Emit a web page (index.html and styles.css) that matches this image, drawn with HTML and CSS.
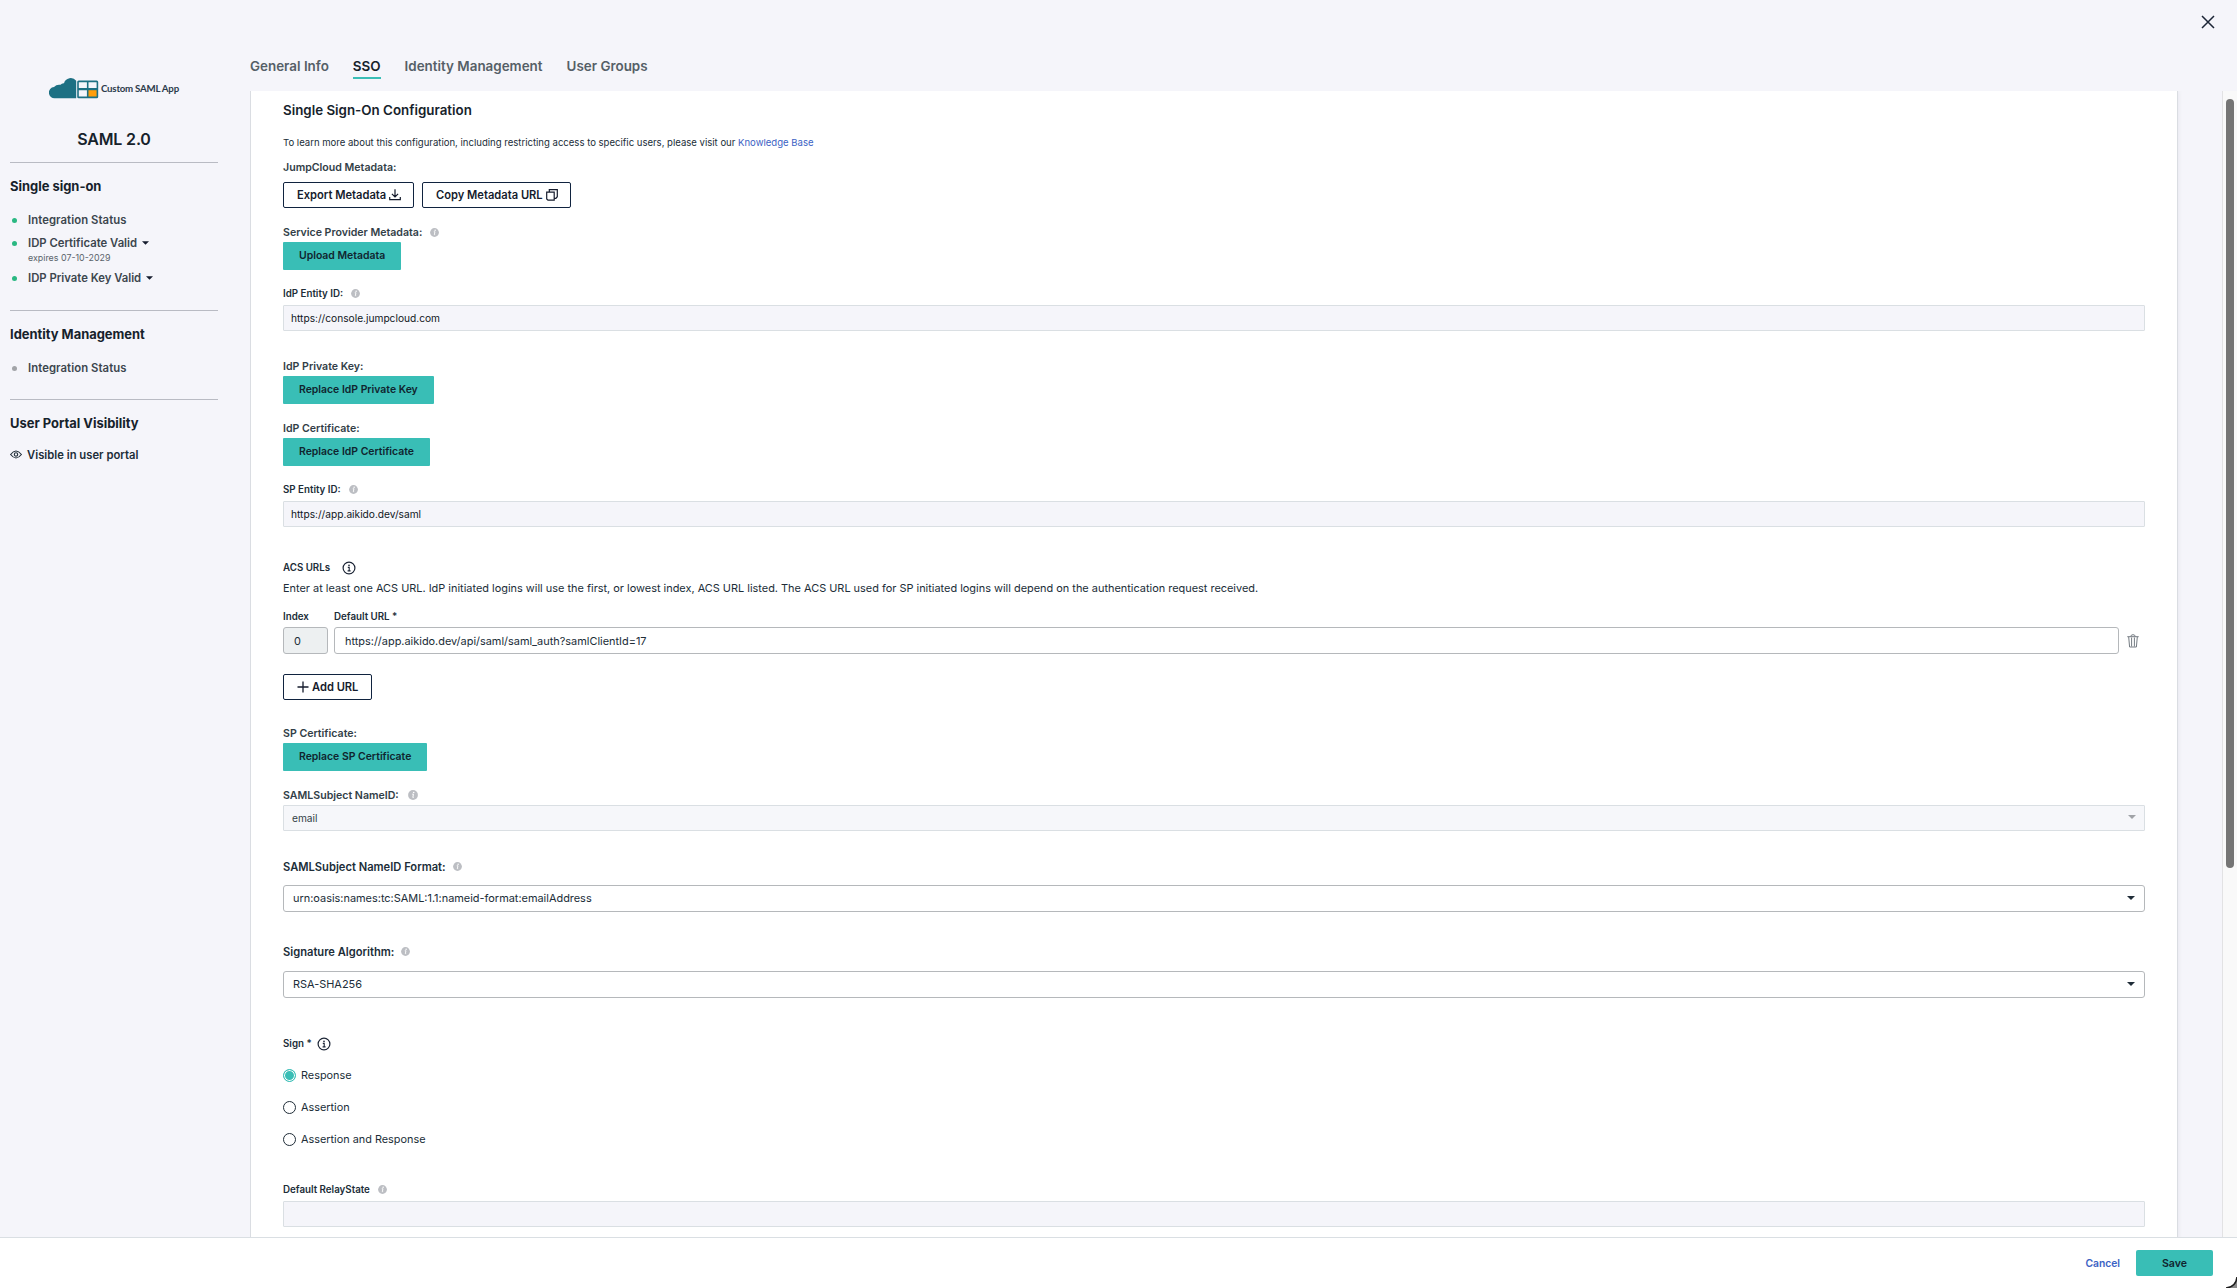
FILE: index.html
```html
<!DOCTYPE html>
<html lang="en">
<head>
    <meta charset="UTF-8">
    <meta name="viewport" content="width=device-width, initial-scale=1.0">
    <title>SAML 2.0 - Single Sign-On Configuration</title>
    <link rel="stylesheet" href="styles.css">
</head>
<body>
    <!-- shared icons -->
    <svg width="0" height="0" class="sprite">
        <symbol id="info-solid" viewBox="0 0 10 10">
            <circle cx="5" cy="5" r="4.9" fill="#bcbec3"/>
            <circle cx="5.7" cy="2.5" r=".8" fill="#fff"/>
            <path d="M4.2 4.2h1.3L4.8 7.4h.9" fill="none" stroke="#fff" stroke-width="1"/>
        </symbol>
        <symbol id="info-outline" viewBox="0 0 14 14">
            <circle cx="7" cy="7" r="5.9" fill="none" stroke="#1c2536" stroke-width="1.2"/>
            <circle cx="7" cy="4.3" r=".85" fill="#1c2536"/>
            <path d="M5.8 6.4H7.2V9.8M5.6 9.9h3" fill="none" stroke="#1c2536" stroke-width="1.1"/>
        </symbol>
        <symbol id="caret" viewBox="0 0 8 4">
            <path d="M0 0h8L4 4z" fill="currentColor"/>
        </symbol>
    </svg>

    <div class="modal">
        <button class="close-btn" aria-label="Close">
            <svg width="14" height="14" viewBox="0 0 14 14"><path d="M1 1l12 12M13 1L1 13" stroke="#1c2536" stroke-width="1.5" fill="none"/></svg>
        </button>

        <div class="modal-body">
            <aside class="sidebar">
                <div class="logo">
                    <svg width="50" height="21" viewBox="0 0 50 21">
                        <path d="M6 20.2A5.6 5.6 0 0 1 5 9 7 7 0 0 1 11.500 6.800 Q12.800 5 15 5.200 A7 7 0 0 1 27.200 2.700V20.200z" fill="#1d7083"/>
                        <rect x="28.200" y="2.500" width="21" height="17.700" rx="1.500" fill="#1d7083"/>
                        <path d="M29.800 4.300h8.100v5.600h-8.100zM39.500 4.300h8.100v5.600h-8.100zM29.800 12.200h8.100v6.300h-8.100z" fill="#f5f5fa"/>
                        <path d="M39.500 12.200h8.100v6.300h-8.100z" fill="#ff9e0b"/>
                    </svg>
                    <span>Custom SAML App</span>
                </div>
                <h1>SAML 2.0</h1>

                <section>
                    <h3>Single sign-on</h3>
                    <div class="status first"><i class="dot green"></i>Integration Status</div>
                    <div class="status cert"><i class="dot green"></i>IDP Certificate Valid <svg class="caret"><use href="#caret"/></svg></div>
                    <div class="expires">expires 07-10-2029</div>
                    <div class="status key"><i class="dot green"></i>IDP Private Key Valid <svg class="caret"><use href="#caret"/></svg></div>
                </section>

                <section>
                    <h3>Identity Management</h3>
                    <div class="status first"><i class="dot"></i>Integration Status</div>
                </section>

                <section>
                    <h3>User Portal Visibility</h3>
                    <div class="visible">
                        <svg width="12" height="9" viewBox="0 0 12 9"><path d="M.6 4.500Q6-2.400 11.400 4.500 6 11.400.6 4.500z" fill="none" stroke="#202d38" stroke-width="1.100"/><circle cx="6" cy="4.500" r="1.700" fill="none" stroke="#202d38" stroke-width="1.100"/></svg>
                        Visible in user portal
                    </div>
                </section>
            </aside>

            <main>
                <nav class="tabs">
                    <a>General Info</a>
                    <a class="active">SSO</a>
                    <a>Identity Management</a>
                    <a>User Groups</a>
                </nav>

                <div class="scroll-area">
                    <div class="card">
                        <h2>Single Sign-On Configuration</h2>
                        <p class="intro">To learn more about this configuration, including restricting access to specific users, please visit our <a>Knowledge Base</a></p>

                        <div class="label jc-label">JumpCloud Metadata:</div>
                        <div class="btn-row">
                            <button class="btn-outline">Export Metadata
                                <svg width="12" height="12" viewBox="0 0 12 12"><path d="M6 .3v7.500M2.900 4.900L6 7.900l3.100-3M.7 8v2.600h10.600V8" fill="none" stroke="#151b2c" stroke-width="1.200"/></svg>
                            </button>
                            <button class="btn-outline copy">Copy Metadata URL
                                <svg width="12" height="12" viewBox="0 0 12 12"><path d="M.7 3.200h7.500v8H2L.7 9.900zM3.300 3V.7h8v7L9.900 9.300H8.400" fill="none" stroke="#151b2c" stroke-width="1.200"/></svg>
                            </button>
                        </div>

                        <div class="label gap">Service Provider Metadata: <svg class="info"><use href="#info-solid"/></svg></div>
                        <button class="btn-teal">Upload Metadata</button>

                        <div class="label small gap-sm">IdP Entity ID: <svg class="info"><use href="#info-solid"/></svg></div>
                        <div class="field">https://console.jumpcloud.com</div>

                        <div class="label gap-lg">IdP Private Key:</div>
                        <button class="btn-teal">Replace IdP Private Key</button>

                        <div class="label gap">IdP Certificate:</div>
                        <button class="btn-teal">Replace IdP Certificate</button>

                        <div class="label small gap-sm">SP Entity ID: <svg class="info"><use href="#info-solid"/></svg></div>
                        <div class="field">https://app.aikido.dev/saml</div>

                        <div class="label small acs-label">ACS URLs <svg class="info-lg"><use href="#info-outline"/></svg></div>
                        <p class="acs-text">Enter at least one ACS URL. IdP initiated logins will use the first, or lowest index, ACS URL listed. The ACS URL used for SP initiated logins will depend on the authentication request received.</p>
                        <div class="url-grid">
                            <div class="label small">Index</div>
                            <div class="label small">Default URL *</div>
                            <span></span>
                            <div class="box index">0</div>
                            <div class="box">https://app.aikido.dev/api/saml/saml_auth?samlClientId=17</div>
                            <svg class="trash" width="12" height="14" viewBox="0 0 12 14"><path d="M.3 2.700h11.400M3.700 2.500Q3.900.7 6 .7t2.300 1.800M1.700 3l.9 10h6.800l.9-10M4.600 3.500v9M7.400 3.500v9" fill="none" stroke="#747b82" stroke-width="1"/></svg>
                        </div>
                        <button class="btn-outline add">
                            <svg width="12" height="12" viewBox="0 0 12 12"><path d="M6 .5v11M.5 6h11" stroke="#151b2c" stroke-width="1.300"/></svg>
                            Add URL
                        </button>

                        <div class="label sp-label">SP Certificate:</div>
                        <button class="btn-teal">Replace SP Certificate</button>

                        <div class="label gap">SAMLSubject NameID: <svg class="info big"><use href="#info-solid"/></svg></div>
                        <div class="field select-disabled">email <svg class="caret"><use href="#caret"/></svg></div>

                        <div class="label large gap-lg">SAMLSubject NameID Format: <svg class="info"><use href="#info-solid"/></svg></div>
                        <div class="box select">urn:oasis:names:tc:SAML:1.1:nameid-format:emailAddress <svg class="caret"><use href="#caret"/></svg></div>

                        <div class="label large sig-label">Signature Algorithm: <svg class="info"><use href="#info-solid"/></svg></div>
                        <div class="box select sig">RSA-SHA256 <svg class="caret"><use href="#caret"/></svg></div>

                        <div class="label small sign-label">Sign * <svg class="info-lg"><use href="#info-outline"/></svg></div>
                        <div class="radio checked"><i></i>Response</div>
                        <div class="radio"><i></i>Assertion</div>
                        <div class="radio"><i></i>Assertion and Response</div>

                        <div class="label small relay-label">Default RelayState <svg class="info"><use href="#info-solid"/></svg></div>
                        <div class="field"></div>
                    </div>
                    <div class="scrollbar"><div class="thumb"></div></div>
                </div>
            </main>
        </div>

        <footer>
            <a>Cancel</a>
            <button class="save-btn">Save</button>
            <svg class="corner" width="11" height="11" viewBox="0 0 11 11"><path d="M11 0v11H0Q10 10 11 0z" fill="#8b8b8b"/><path d="M0 11Q10 10 11 0" fill="none" stroke="#1d1d1d" stroke-width="1.500"/></svg>
        </footer>
    </div>
</body>
</html>
```

FILE: styles.css
```css
* {
    box-sizing: border-box;
}

body {
    margin: 0;
    overflow: hidden;
    background: #f5f5fa;
    color: #202d38;
    font-family: Inter, "Liberation Sans", sans-serif;
    font-size: 10.93px;
    line-height: 14px;
}

h1, h2, h3, p {
    margin: 0;
}

button {
    font-family: inherit;
    cursor: pointer;
}

svg {
    display: block;
    flex: none;
}

.sprite {
    position: absolute;
}

.modal {
    height: 100vh;
    display: flex;
    flex-direction: column;
}

.close-btn {
    position: absolute;
    top: 15px;
    right: 22px;
    padding: 0;
    border: none;
    background: none;
}

.modal-body {
    flex: 1;
    min-height: 0;
    display: flex;
}

/* Sidebar */
.sidebar {
    width: 250px;
    padding: 78px 32px 0 10px;
    flex: none;
}

.logo {
    display: flex;
    align-items: center;
    height: 21px;
    padding-left: 39px;
    font-family: Lato, sans-serif;
    font-size: 9.7px;
    font-weight: 700;
    letter-spacing: -0.22px;
    line-height: 12px;
    color: #2b3a4a;
    white-space: nowrap;
}

.logo span {
    margin: -2px 0 0 2px;
}

h1 {
    margin: 30px 0 13px;
    font-size: 16px;
    line-height: 20px;
    font-weight: 600;
    letter-spacing: -0.17px;
    text-align: center;
    color: #16222b;
}

.sidebar section {
    border-top: 1px solid #b9bbc3;
    padding-top: 13px;
    margin-bottom: 24px;
}

h3 {
    font-size: 12.93px;
    line-height: 20px;
    font-weight: 700;
    color: #16222b;
}

.status {
    display: flex;
    align-items: center;
    font-size: 11.3px;
    font-weight: 600;
    color: #3c464e;
}

.status.first {
    margin-top: 17px;
    letter-spacing: 0.08px;
}

.status.cert {
    margin-top: 9px;
}

.status.key {
    margin: 6px 0 25px;
}

.dot {
    width: 5px;
    height: 5px;
    margin: 0 11px 0 2px;
    border-radius: 50%;
    background: #a2a4a8;
}

.dot.green {
    background: #2ab882;
}

.caret {
    width: 8px;
    height: 4px;
}

.status .caret {
    width: 7px;
    margin-left: 5px;
    color: #151b2c;
}

.expires {
    margin: 1px 0 0 18px;
    font-size: 8.9px;
    color: #5a636b;
}

.visible {
    display: flex;
    align-items: center;
    gap: 5px;
    margin-top: 15px;
    font-size: 11.25px;
    font-weight: 600;
}

.visible svg {
    margin-top: -2px;
}

/* Tabs */
main {
    flex: 1;
    min-width: 0;
    display: flex;
    flex-direction: column;
}

.tabs {
    display: flex;
    align-items: flex-start;
    gap: 24px;
    height: 91px;
    padding-top: 56px;
    flex: none;
}

.tabs a {
    height: 23px;
    font-size: 13.42px;
    line-height: 20px;
    font-weight: 600;
    color: #555f67;
}

.tabs .active {
    color: #16222b;
    border-bottom: 2px solid #39beb6;
}

/* Card */
.scroll-area {
    flex: 1;
    min-height: 0;
    display: flex;
    justify-content: space-between;
    overflow: hidden;
}

.card {
    width: 1928px;
    height: 1600px;
    padding: 9px 32px 0 32px;
    background: #fff;
    border: 1px solid #dadde2;
    border-width: 0 1px;
    box-shadow: 0 0 5px rgba(20, 30, 60, 0.08);
}

h2 {
    font-size: 13.35px;
    line-height: 20px;
    font-weight: 600;
    color: #16222b;
}

.intro {
    margin-top: 16px;
    font-size: 9.55px;
}

.intro a {
    color: #3b62c4;
}

.label {
    display: flex;
    align-items: center;
    height: 14px;
    padding-top: 2px;
    font-size: 10.6px;
    font-weight: 600;
    color: #323e47;
}

.label.small {
    font-size: 9.75px;
    color: #202d38;
}

.label.large {
    padding-top: 1px;
    font-size: 11.17px;
    color: #202d38;
}

.info {
    width: 9px;
    height: 9px;
    margin: -2px 0 0 8px;
}

.info.big {
    width: 10px;
    height: 10px;
    margin-left: 9px;
}

.label.large .info {
    margin: 0 0 0 7px;
}

.info-lg {
    width: 14px;
    height: 14px;
    margin: 0 0 0 12px;
}

.jc-label {
    margin-top: 10px;
}

.gap {
    margin-top: 17px;
}

.gap-sm {
    margin-top: 16px;
}

.gap-lg {
    margin-top: 28px;
}

.btn-row {
    display: flex;
    gap: 8px;
    margin-top: 8px;
}

.btn-outline {
    display: flex;
    align-items: center;
    gap: 3px;
    width: 131px;
    height: 26px;
    padding: 0 0 0 13px;
    border: 1px solid #10233f;
    border-radius: 2px;
    background: #fff;
    font-size: 11.15px;
    font-weight: 600;
    color: #151b2c;
    white-space: nowrap;
}

.btn-outline svg {
    margin-top: -1px;
}

.btn-outline.copy {
    width: 149px;
}

.btn-outline.add {
    width: 89px;
    margin-top: 20px;
}

.btn-teal {
    display: block;
    height: 28px;
    margin-top: 3px;
    padding: 0 16px 1px;
    border: none;
    border-radius: 1px;
    background: #39beb6;
    font-size: 10.43px;
    font-weight: 600;
    color: #10252f;
}

.field {
    display: flex;
    align-items: center;
    justify-content: space-between;
    height: 26px;
    margin-top: 5px;
    padding: 0 8px 0 7px;
    border: 1px solid #dadfe3;
    border-radius: 1px;
    background: #f5f5fa;
    font-size: 10.18px;
    color: #10161c;
}

.select-disabled {
    margin-top: 3px;
    background: #f6f7fa;
    padding-left: 8px;
    color: #323e47;
}

.select-disabled .caret {
    margin-top: -2px;
    color: #a0a3a7;
}

.box {
    display: flex;
    align-items: center;
    height: 27px;
    padding: 1px 10px 0;
    border: 1px solid #b5b8bb;
    border-radius: 3px;
    background: #fff;
}

.acs-label {
    margin-top: 33px;
}

.acs-text {
    margin-top: 7px;
    font-size: 10.93px;
}

.url-grid {
    display: grid;
    grid-template-columns: 45px 1785px 12px;
    column-gap: 6px;
    row-gap: 4px;
    margin-top: 14px;
}

.box.index {
    background: #edf0f1;
}

.trash {
    margin: 7px 0 0 2px;
}

.sp-label {
    margin-top: 26px;
}

.select {
    justify-content: space-between;
    margin-top: 12px;
    padding: 0 9px 1px;
}

.select.sig {
    margin-top: 13px;
}

.sig-label {
    margin-top: 32px;
}

.sign-label {
    margin-top: 38px;
}

.sign-label .info-lg {
    margin-left: 5px;
}

.radio {
    display: flex;
    align-items: center;
    margin-top: 18px;
    font-size: 10.87px;
}

.radio i {
    width: 13px;
    height: 13px;
    margin-right: 5px;
    border: 1px solid #202d38;
    border-radius: 50%;
}

.radio.checked i {
    border-color: #39beb6;
    background: #39beb6;
    box-shadow: inset 0 0 0 1px #fff;
}

.relay-label {
    margin-top: 36px;
}

/* Scrollbar */
.scrollbar {
    width: 15px;
    padding: 8px 0 0 3px;
    border-left: 1px solid #e2e2e4;
    background: #f9f9f9;
}

.thumb {
    width: 8px;
    height: 769px;
    border-radius: 4px;
    background: #757575;
}

/* Footer */
footer {
    position: relative;
    display: flex;
    align-items: center;
    justify-content: flex-end;
    gap: 16px;
    height: 51px;
    padding-right: 24px;
    border-top: 1px solid #dadfe3;
    background: #fff;
    flex: none;
}

footer a {
    font-size: 10.3px;
    font-weight: 600;
    color: #3b62c4;
}

.save-btn {
    width: 77px;
    height: 26px;
    border: none;
    border-radius: 2px;
    background: #39beb6;
    font-size: 10.6px;
    font-weight: 600;
    color: #10252f;
}

.corner {
    position: absolute;
    right: 0;
    bottom: 0;
}
```
